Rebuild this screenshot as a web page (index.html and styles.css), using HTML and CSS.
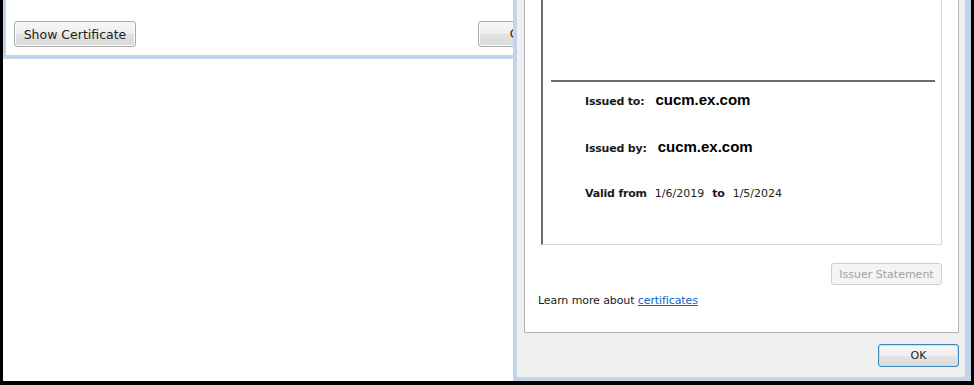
FILE: index.html
```html
<!DOCTYPE html>
<html lang="en">
<head>
    <meta charset="UTF-8">
    <meta name="viewport" content="width=device-width, initial-scale=1.0">
    <title>Certificate</title>
    <link rel="stylesheet" href="styles.css">
</head>
<body>
    <div class="back-window">
        <div class="back-dialog">
            <div class="back-buttons">
                <button class="btn btn-show">Show Certificate</button>
                <button class="btn btn-close">Close</button>
            </div>
        </div>
    </div>

    <div class="cert-dialog">
        <div class="cert-panel">
            <div class="cert-box">
                <div class="cert-head"></div>
                <div class="cert-rule"></div>
                <div class="cert-rows">
                    <div class="cert-row">
                        <span class="cert-label">Issued to:</span>
                        <span class="cert-value">cucm.ex.com</span>
                    </div>
                    <div class="cert-row">
                        <span class="cert-label">Issued by:</span>
                        <span class="cert-value">cucm.ex.com</span>
                    </div>
                    <div class="cert-row cert-dates">
                        <span class="cert-label">Valid from</span>
                        <span class="cert-date">1/6/2019</span>
                        <span class="cert-label">to</span>
                        <span class="cert-date">1/5/2024</span>
                    </div>
                </div>
            </div>
            <div class="statement-row">
                <button class="btn btn-disabled">Issuer Statement</button>
            </div>
            <p class="learn">Learn more about <a href="#">certificates</a></p>
        </div>
        <div class="cert-footer">
            <button class="btn btn-ok">OK</button>
        </div>
    </div>
</body>
</html>
```

FILE: styles.css
```css
body {
    margin: 0;
    height: 385px;
    box-sizing: border-box;
    padding: 0 3px 4px 3px;
    background-color: #000;
    display: flex;
    font-family: "DejaVu Sans", sans-serif;
    font-size: 11px;
    color: #1a1a1a;
    overflow: hidden;
}

/* window behind the dialog */
.back-window {
    flex: 1;
    min-width: 0;
    background-color: #fff;
    overflow: hidden;
}

.back-dialog {
    width: 640px;
    height: 55px;
    background-color: #fff;
    border-left: 3px solid #c2d4ea;
    border-bottom: 4px solid #c2d4ea;
    padding-left: 8px;
}

.back-buttons {
    display: flex;
    gap: 342px;
    padding-top: 21px;
}

.btn {
    font-family: "DejaVu Sans", sans-serif;
    font-size: 12px;
    color: #222;
    height: 26px;
    padding: 0;
    white-space: nowrap;
    border: 1px solid #a9a9a9;
    border-radius: 3px;
    background: linear-gradient(#f6f6f6 0%, #efefef 50%, #e3e3e3 51%, #dadada 100%);
    box-shadow: inset 0 0 0 1px #fbfbfb;
    cursor: pointer;
}

.btn-show {
    width: 122px;
    font-size: 12.5px;
}

.btn-close {
    width: 96px;
    flex: none;
}

/* certificate dialog */
.cert-dialog {
    flex: none;
    width: 458px;
    box-sizing: border-box;
    display: flex;
    flex-direction: column;
    background-color: #f0f0f0;
    border-left: 4px solid #c2d4ea;
    border-right: 6px solid #c2d4ea;
    border-bottom: 4px solid #c2d4ea;
    padding: 0 6px 0 7px;
}

.cert-panel {
    height: 333px;
    box-sizing: border-box;
    background-color: #fff;
    border: 1px solid #b4b4b4;
    border-top: none;
    padding: 0 16px 0 13px;
}

.cert-box {
    height: 245px;
    box-sizing: border-box;
    margin-left: 3px;
    border-left: 2px solid #6e6e6e;
    border-right: 1px solid #d8d8d8;
    border-bottom: 1px solid #d8d8d8;
}

.cert-head {
    height: 80px;
}

.cert-rule {
    height: 2px;
    margin: 0 6px 0 8px;
    background-color: #6c6c6c;
}

.cert-rows {
    display: flex;
    flex-direction: column;
    gap: 27px;
    padding: 8px 0 0 42px;
}

.cert-row {
    display: flex;
    align-items: baseline;
    gap: 11px;
    height: 20px;
    line-height: 20px;
}

.cert-label {
    font-weight: bold;
    color: #1a1a1a;
    letter-spacing: -0.2px;
}

.cert-value {
    font-family: "Liberation Sans", Arial, sans-serif;
    font-weight: bold;
    font-size: 15px;
    color: #000;
}

.cert-dates {
    gap: 8px;
}

.cert-date {
    color: #222;
}

.statement-row {
    display: flex;
    justify-content: flex-end;
    margin-top: 18px;
}

.btn-disabled {
    width: 111px;
    height: 22px;
    font-size: 11px;
    color: #a2a2a2;
    border-color: #cdcdcd;
    background: #f4f4f4;
    box-shadow: none;
    cursor: default;
}

.learn {
    margin: 9px 0 0;
    line-height: 14px;
    letter-spacing: -0.1px;
}

.learn a {
    color: #0a66cc;
}

.cert-footer {
    display: flex;
    justify-content: flex-end;
    padding-top: 11px;
}

.btn-ok {
    width: 81px;
    height: 23px;
    font-size: 11px;
    border-color: #3d86b5;
    box-shadow: inset 0 0 0 1px #bfe3f5;
}
```
